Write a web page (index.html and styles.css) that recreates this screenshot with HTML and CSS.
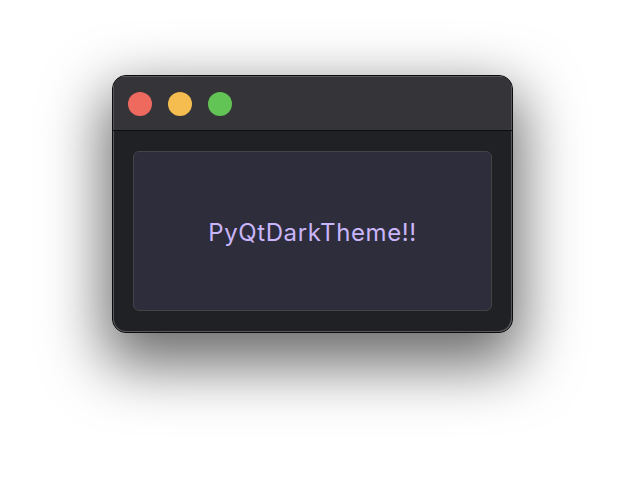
FILE: index.html
```html
<!DOCTYPE html>
<html>
<head>
<meta charset="utf-8">
<link rel="stylesheet" href="styles.css">
</head>
<body>
<div class="stage">
  <div class="window">
    <div class="titlebar">
      <span class="light red"></span>
      <span class="light yellow"></span>
      <span class="light green"></span>
    </div>
    <div class="content">
      <div class="panel">PyQtDarkTheme!!</div>
    </div>
  </div>
</div>
</body>
</html>
```
FILE: styles.css
```css
html, body {
  margin: 0;
  padding: 0;
  background: #ffffff;
}
.stage {
  width: 624px;
  height: 480px;
  padding-top: 75px;
  box-sizing: border-box;
  display: flex;
  justify-content: center;
  align-items: flex-start;
}
.window {
  width: 401px;
  height: 258px;
  box-sizing: border-box;
  border-radius: 14px;
  border: 1px solid #0c0c0d;
  box-shadow: inset 0 0 0 1px #58585c, 0 24px 60px 8px rgba(0,0,0,0.58);
  background: #202124;
  overflow: hidden;
  display: flex;
  flex-direction: column;
  margin-left: 1px;
}
.titlebar {
  height: 55px;
  background: #353438;
  border-bottom: 1px solid #0e0e10;
  box-sizing: border-box;
  display: flex;
  align-items: center;
  padding-left: 15px;
  gap: 16px;
  padding-top: 2px;
  box-shadow: inset 1px 1px 0 #58585c, inset -1px 0 0 #58585c;
}
.light {
  width: 24px;
  height: 24px;
  border-radius: 50%;
  display: block;
}
.red { background: #ee6a5f; }
.yellow { background: #f5bd4f; }
.green { background: #61c454; }
.content {
  flex: 1;
  padding: 20px 20px 21px 20px;
  display: flex;
  box-shadow: inset 1px 0 0 #58585c, inset -1px -1px 0 #58585c;
  border-radius: 0 0 13px 13px;
}
.panel {
  flex: 1;
  background: #2e2d3b;
  border: 1px solid #444448;
  border-radius: 6px;
  display: flex;
  align-items: center;
  justify-content: center;
  color: #c9b6fa;
  font-family: Inter, "Noto Sans", sans-serif;
  font-size: 24px;
  letter-spacing: 0.6px;
  padding-top: 2px;
}
```
